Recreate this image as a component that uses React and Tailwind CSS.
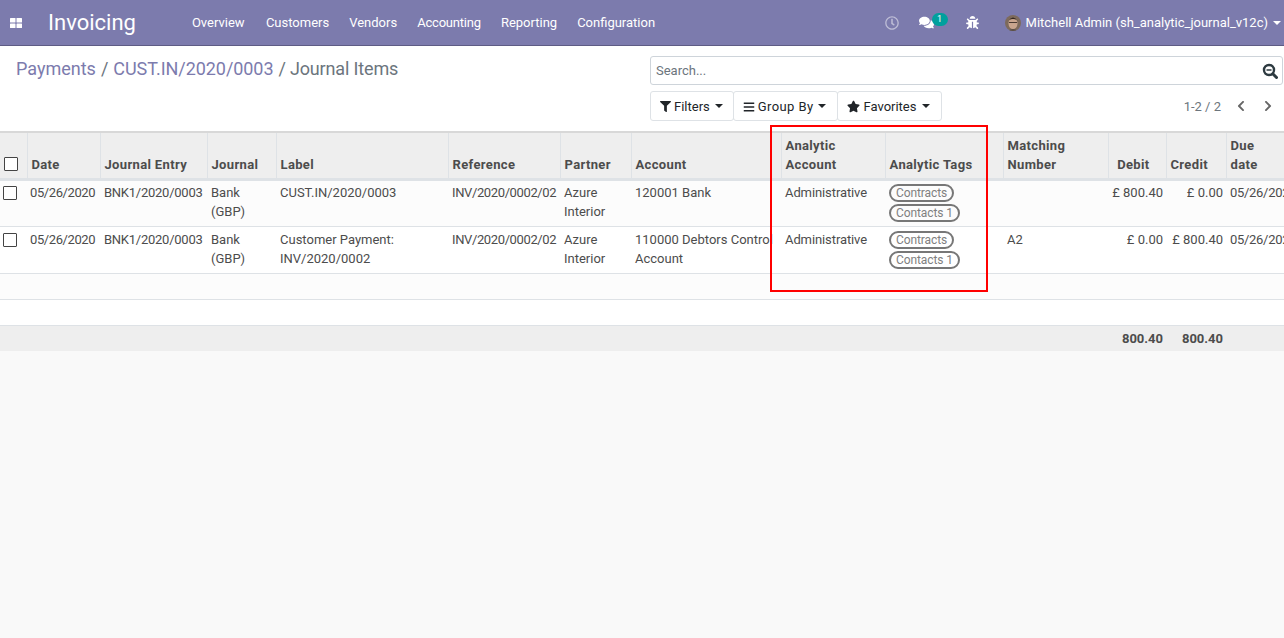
import { FaRegClock, FaComments, FaBug, FaFilter, FaBars, FaStar, FaChevronLeft, FaChevronRight } from 'react-icons/fa';

const menus = [
    { name: 'Overview', cls: 'w-[54px]' },
    { name: 'Customers', cls: '' },
    { name: 'Vendors', cls: '' },
    { name: 'Accounting', cls: 'tracking-[-0.2px]' },
    { name: 'Reporting', cls: '' },
    { name: 'Configuration', cls: '' },
];

const rows = [
    { label: 'CUST.IN/2020/0003', account: '120001 Bank', matching: '', debit: '£ 800.40', credit: '£ 0.00', bg: 'bg-[#fcfcfc]', pad: 'pt-[2px]', boxPad: 'pt-[5px]', tagPad: 'pt-[3px]' },
    { label: 'Customer Payment: INV/2020/0002', account: '110000 Debtors Control Account', matching: 'A2', debit: '£ 0.00', credit: '£ 800.40', bg: 'bg-white', pad: 'pt-[3px]', boxPad: 'pt-[6px]', tagPad: 'pt-[4px]' },
];

const Tag = ({ children }) => (
    <div className="w-fit h-[18px] rounded-full border-2 border-[#777] px-[5px] text-[12px] leading-[14px] tracking-[-0.1px] text-[#808080] mb-[2px]">
        {children}
    </div>
);

const Caret = ({ className = 'ml-[5px]' }) => <span className={`inline-block mb-[2px] border-x-[4px] border-t-[4px] border-x-transparent border-t-[#212529] ${className}`} />;

const Th = ({ className = '', children }) => (
    <th className={`border-l border-[#dee2e6] pl-[4px] pr-[3px] pt-[3px] pb-[4px] align-bottom font-bold text-[13px] leading-[19px] tracking-[0.35px] text-[#4c4c4c] ${className}`}>{children}</th>
);

const Td = ({ className = '', children }) => (
    <td className={`pl-[4px] pr-[3px] align-top text-[13px] leading-[19px] ${className}`}>{children}</td>
);

const Checkbox = () => <span className="block w-[14px] h-[14px] border border-[#444] bg-white rounded-[1px]" />;

export default function App() {
    return (
        <div className="relative h-[638px] w-[1284px] overflow-hidden bg-[#f9f9f9] font-['Roboto',sans-serif] text-[13px] text-[#4c4c4c]">
            {/* Navbar */}
            <header className="flex h-[46px] items-center border-b border-[#5e5c84] bg-[#7c7bad] text-white">
                <svg className="ml-[10px] w-[12px] h-[10px]" viewBox="0 0 12 10" fill="white">
                    <rect x="0" y="0" width="5.5" height="4.5" rx="0.5" />
                    <rect x="6.5" y="0" width="5.5" height="4.5" rx="0.5" />
                    <rect x="0" y="5.5" width="5.5" height="4.5" rx="0.5" />
                    <rect x="6.5" y="5.5" width="5.5" height="4.5" rx="0.5" />
                </svg>
                <span className="ml-[26px] text-[22px] leading-none">Invoicing</span>
                <nav className="ml-[56px] flex gap-[20px]">
                    {menus.map((m) => <span key={m.name} className={m.cls}>{m.name}</span>)}
                </nav>
                <div className="ml-auto flex items-center">
                    <FaRegClock size={14} className="opacity-50" />
                    <div className="relative ml-[20px] mr-[32px]">
                        <FaComments size={15} />
                        <span className="absolute left-[13px] -top-[2px] h-[13px] w-[16px] rounded-full bg-[#00a09d] text-center text-[9px] leading-[13px]">1</span>
                    </div>
                    <FaBug size={13} />
                    <svg className="ml-[26px] w-[16px] h-[16px] rounded-full" viewBox="0 0 16 16">
                        <rect width="16" height="16" fill="#7d6a5c" />
                        <ellipse cx="8" cy="8.5" rx="4.5" ry="5.5" fill="#c9a58e" />
                        <path d="M3 6 Q8 -1 13 6 L12 5 Q8 3 4 5 Z" fill="#33261f" />
                        <rect x="4" y="7" width="8" height="1" fill="#4a3a33" />
                        <path d="M3 16 Q8 12 13 16 Z" fill="#5a4f48" />
                    </svg>
                    <span className="ml-[5px]">Mitchell Admin (sh_analytic_journal_v12c)</span>
                    <span className="ml-[5px] mr-[3px] border-x-[4px] border-t-[4px] border-x-transparent border-t-white" />
                </div>
            </header>

            {/* Control panel */}
            <div className="flex h-[85px] bg-white pl-[16px] pr-[1px]">
                <div className="mt-[9px] text-[18px] leading-[27px]">
                    <span className="text-[#7c7bad]">Payments</span>
                    <span className="mx-[5px] text-[#6c757d]">/</span>
                    <span className="text-[#7c7bad] tracking-[-0.06px]">CUST.IN/2020/0003</span>
                    <span className="ml-[5px] mr-[4px] text-[#6c757d]">/</span>
                    <span className="text-[#6c757d] tracking-[-0.15px]">Journal Items</span>
                </div>
                <div className="ml-auto w-[633px] pt-[10px]">
                    <div className="flex h-[29px] items-center justify-between rounded-[3px] border border-[#ced4da] pl-[5px] pr-[4px] text-[#6c757d]">
                        <span>Search...</span>
                        <svg className="w-[16px] h-[16px]" viewBox="0 0 16 16" fill="none" stroke="#2d3a40">
                            <circle cx="7" cy="7" r="5" strokeWidth="2.4" />
                            <path d="M10.8 10.8 L14.5 14.5" strokeWidth="3" strokeLinecap="round" />
                            <path d="M4.5 7 H9.5" strokeWidth="1.5" />
                        </svg>
                    </div>
                    <div className="mt-[6px] flex items-center">
                        <div className="flex h-[30px] items-center rounded-[3px] border border-[#dee2e6] pt-px pl-[9px] pr-[10px] text-[#212529]">
                            <FaFilter size={11} className="mr-[3px]" />Filters<Caret />
                        </div>
                        <div className="-ml-px flex h-[30px] items-center rounded-[3px] border border-[#dee2e6] pt-px pl-[9px] pr-[11px] text-[#212529]">
                            <FaBars size={12} className="mr-[3px]" /><span className="tracking-[0.4px]">Group By</span><Caret />
                        </div>
                        <div className="-ml-px flex h-[30px] items-center rounded-[3px] border border-[#dee2e6] pt-px pl-[9px] pr-[11px] text-[#212529]">
                            <FaStar size={13} className="mr-[3px]" />Favorites<Caret className="ml-[6px]" />
                        </div>
                        <span className="ml-auto pt-px text-[#6c757d]">1-2 / 2</span>
                        <FaChevronLeft size={12} className="ml-[14px] text-[#666]" />
                        <FaChevronRight size={12} className="ml-[15px] mr-[9px] text-[#666]" />
                    </div>
                </div>
            </div>

            {/* List */}
            <table className="w-full table-fixed border-collapse bg-white">
                <colgroup>
                    <col className="w-[27px]" /><col className="w-[73px]" /><col className="w-[107px]" /><col className="w-[69px]" />
                    <col className="w-[172px]" /><col className="w-[112px]" /><col className="w-[71px]" /><col className="w-[150px]" />
                    <col className="w-[104px]" /><col className="w-[118px]" /><col className="w-[105px]" /><col className="w-[58px]" />
                    <col className="w-[60px]" /><col className="w-[58px]" />
                </colgroup>
                <thead>
                    <tr className="h-[45px] border-y-[2px] border-t-[#d8d8d8] border-b-[#dee2e6] border-b-[3px] bg-[#eeeeee] text-left">
                        <th className="px-[4px] pb-[7px] align-bottom"><Checkbox /></th>
                        <Th>Date</Th>
                        <Th>Journal Entry</Th>
                        <Th>Journal</Th>
                        <Th>Label</Th>
                        <Th>Reference</Th>
                        <Th>Partner</Th>
                        <Th>Account</Th>
                        <Th>Analytic Account</Th>
                        <Th>Analytic Tags</Th>
                        <Th>Matching Number</Th>
                        <Th className="text-right pr-[16px]">Debit</Th>
                        <Th>Credit</Th>
                        <Th>Due date</Th>
                    </tr>
                </thead>
                <tbody>
                    {rows.map((r) => (
                        <tr key={r.label} className={`h-[47px] border-b border-[#dee2e6] ${r.bg}`}>
                            <td className={`px-[3px] align-top ${r.boxPad}`}><Checkbox /></td>
                            <Td className={`!pl-[3px] tracking-[-0.4px] ${r.pad}`}>05/26/2020</Td>
                            <Td className={`tracking-[-0.25px] ${r.pad}`}>BNK1/2020/0003</Td>
                            <Td className={r.pad}>Bank (GBP)</Td>
                            <Td className={r.pad}>{r.label}</Td>
                            <Td className={`tracking-[-0.38px] ${r.pad}`}>INV/2020/0002/02</Td>
                            <Td className={r.pad}>Azure Interior</Td>
                            <Td className={r.pad}><div className="w-[150px]">{r.account}</div></Td>
                            <Td className={`tracking-[-0.1px] ${r.pad}`}>Administrative</Td>
                            <td className={`pl-[4px] align-top ${r.tagPad}`}>
                                <Tag>Contracts</Tag>
                                <Tag>Contacts 1</Tag>
                            </td>
                            <Td className={r.pad}>{r.matching}</Td>
                            <Td className={`text-right ${r.pad}`}>{r.debit}</Td>
                            <Td className={`text-right ${r.pad}`}>{r.credit}</Td>
                            <Td className={r.pad}><div className="whitespace-nowrap tracking-[-0.3px]">05/26/2020</div></Td>
                        </tr>
                    ))}
                    <tr className="h-[26px] border-b border-[#dee2e6] bg-[#fcfcfc]"><td colSpan={14} /></tr>
                    <tr className="h-[26px] border-b border-[#dee2e6] bg-white"><td colSpan={14} /></tr>
                </tbody>
                <tfoot>
                    <tr className="h-[25px] bg-[#eeeeee] font-bold">
                        <td colSpan={11} />
                        <td className="px-[3px] text-right">800.40</td>
                        <td className="px-[3px] text-right">800.40</td>
                        <td />
                    </tr>
                </tfoot>
            </table>

            {/* Red highlight drawn over the screenshot */}
            <div className="absolute left-[770px] top-[125px] h-[167px] w-[218px] border-2 border-[#ff0000]" />
        </div>
    );
}
